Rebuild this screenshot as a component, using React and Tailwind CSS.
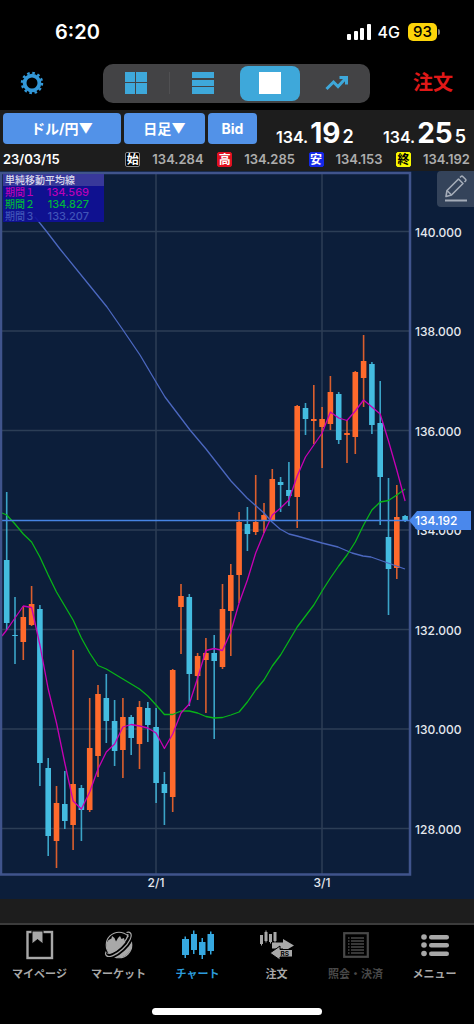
import clsx from "clsx";

// [high, body top, body bottom, low, up]
const candles = [
  [492, 560, 623, 630, 0],
  [597, 635, 636, 664, 0],
  [606, 617, 642, 660, 1],
  [586, 604, 625, 626, 1],
  [605, 609, 763, 786, 0],
  [758, 768, 836, 856, 0],
  [786, 803, 841, 868, 1],
  [771, 804, 821, 829, 0],
  [650, 784, 825, 850, 1],
  [785, 788, 810, 841, 0],
  [698, 748, 810, 812, 1],
  [685, 694, 756, 777, 1],
  [674, 698, 721, 743, 0],
  [700, 721, 751, 766, 0],
  [698, 717, 750, 778, 1],
  [715, 717, 738, 755, 0],
  [701, 707, 744, 769, 1],
  [702, 708, 725, 742, 0],
  [708, 727, 783, 803, 0],
  [772, 784, 793, 825, 0],
  [669, 670, 797, 812, 1],
  [584, 596, 607, 654, 1],
  [594, 597, 674, 706, 0],
  [653, 656, 676, 700, 1],
  [638, 653, 660, 713, 1],
  [635, 653, 661, 739, 0],
  [584, 609, 667, 669, 1],
  [564, 575, 611, 656, 1],
  [512, 522, 575, 603, 1],
  [507, 524, 534, 551, 0],
  [475, 522, 532, 535, 1],
  [503, 515, 520, 533, 1],
  [469, 479, 520, 521, 1],
  [477, 482, 485, 512, 0],
  [462, 490, 496, 506, 0],
  [405, 406, 497, 528, 1],
  [403, 408, 419, 435, 0],
  [385, 419, 421, 444, 1],
  [407, 419, 427, 468, 1],
  [376, 392, 424, 430, 1],
  [392, 394, 440, 444, 0],
  [420, 433, 435, 463, 1],
  [371, 372, 437, 454, 1],
  [335, 361, 378, 407, 1],
  [362, 364, 425, 434, 0],
  [381, 423, 477, 525, 0],
  [478, 537, 569, 615, 0],
  [485, 517, 568, 579, 1],
  [515, 516, 520, 522, 0],
];

const candleX = (i) => 6.7 + i * 8.3;

const shortAverage = [
  630, 618, 606, 607.5, 645, 689, 723, 763, 801, 809, 792, 769, 752, 744, 727, 724.5, 726, 728,
  733, 748.5, 734, 713, 704, 678, 650.5, 648.5, 650.5, 632, 603, 580, 553, 533, 515, 508, 500,
  476, 457, 445, 433, 412, 418, 420.5, 411, 400, 407, 414, 441, 470, 501,
];

const middleAverage = [
  515, 524, 534, 542, 557, 575, 592, 606, 620, 638, 653, 665.5, 669, 674, 679, 684, 689, 696,
  705, 714.5, 714.5, 711, 711, 713, 716.5, 718, 717.5, 715, 712, 702, 690, 680, 666, 655, 641,
  627, 616, 605, 591, 578, 566, 555, 542, 525, 510, 502, 500.5, 495, 489,
];

const longAverage =
  "35,217 47,232 60,249 90,286 107,307 123,330 140,355 156,382 165,397 190,430 206,449 231,481 247,498 264,513 272,522 280,529 289,534 297,536 322,543 338,547 352,553 363,556 371,557 388,563 405,569";

const toPoints = (start, ys) => [start, ...ys.map((y, i) => `${candleX(i)},${y}`)].join(" ");

const priceLines = [
  { label: "140.000", y: 231.5 },
  { label: "138.000", y: 331 },
  { label: "136.000", y: 430.5 },
  { label: "134.000", y: 530 },
  { label: "132.000", y: 629.5 },
  { label: "130.000", y: 729 },
  { label: "128.000", y: 828.5 },
];

const dateLines = [
  { label: "2/1", x: 156 },
  { label: "3/1", x: 322 },
];

const averages = [
  { label: "期間１", value: "134.569", color: "text-[#b800b8]" },
  { label: "期間２", value: "134.827", color: "text-[#00b43c]" },
  { label: "期間３", value: "133.207", color: "text-[#4054b8]" },
];

const ohlc = [
  { label: "始", value: "134.284", badge: "bg-black text-white border-[#8a8a8a]" },
  { label: "高", value: "134.285", badge: "bg-[#e01020] text-white border-[#e01020]" },
  { label: "安", value: "134.153", badge: "bg-[#1428e8] text-white border-[#1428e8]" },
  { label: "終", value: "134.192", badge: "bg-[#f8f800] text-black border-[#f8f800]" },
];

function StatusBar() {
  return (
    <div className="flex h-[60px] items-center justify-between pl-[55px] pr-[34px] pt-1">
      <span className="text-[20px] font-semibold">6:20</span>
      <div className="flex items-center">
        <svg width="25" height="16" viewBox="0 0 25 16" fill="#fff">
          <rect x="0" y="10" width="4" height="6" rx="1" />
          <rect x="7" y="7" width="4" height="9" rx="1" />
          <rect x="13" y="4" width="4" height="12" rx="1" />
          <rect x="20" y="0" width="4" height="16" rx="1" />
        </svg>
        <span className="ml-1.5 text-[16px] font-medium">4G</span>
        <span className="ml-2 flex h-[18px] w-[29px] items-center justify-center rounded-[5px] bg-[#fcd40a] text-[15px] font-medium text-black">
          93
        </span>
        <span className="ml-px h-[6px] w-[2px] rounded-r bg-[#777]" />
      </div>
    </div>
  );
}

function GearIcon() {
  return (
    <svg width="24" height="24" viewBox="0 0 24 24" fill="none" stroke="#3398d8">
      <circle cx="12" cy="12" r="7.4" strokeWidth="3.8" />
      <circle cx="12" cy="12" r="10" strokeWidth="2.4" strokeDasharray="2.6 2.636" />
    </svg>
  );
}

function Toolbar() {
  return (
    <div className="flex h-[50px] items-center justify-between pb-2 pl-5 pr-[21px] pt-1">
      <button type="button" aria-label="設定">
        <GearIcon />
      </button>
      <div className="ml-4 grid h-[39px] w-[267px] grid-cols-4 items-center rounded-[10px] bg-[#434345]">
        <button type="button" aria-label="四分割" className="flex justify-center border-r border-[#505052]">
          <svg width="22" height="22" fill="#3ea8da">
            <rect width="10" height="10" />
            <rect x="11" width="11" height="10" />
            <rect y="11" width="10" height="11" />
            <rect x="11" y="11" width="11" height="11" />
          </svg>
        </button>
        <button type="button" aria-label="一覧" className="flex justify-center">
          <svg width="22" height="22" fill="#3ea8da">
            <rect width="22" height="6" />
            <rect y="8" width="22" height="6" />
            <rect y="15" width="22" height="7" />
          </svg>
        </button>
        <button
          type="button"
          aria-label="単独"
          className="mx-[3px] flex h-[35px] items-center justify-center rounded-[8px] bg-[#3ea8da]"
        >
          <span className="size-[22px] bg-white" />
        </button>
        <button type="button" aria-label="推移" className="flex justify-center">
          <svg width="24" height="16" viewBox="0 0 24 16" fill="none" stroke="#3ea8da" strokeWidth="3">
            <path d="M1.5 14 8.5 7l4.5 4.5L20 4" />
            <path d="M14.5 2.5h7V9.5" />
          </svg>
        </button>
      </div>
      <button type="button" className="text-[20px] font-bold text-[#e01818]">
        注文
      </button>
    </div>
  );
}

function Quote({ head, main, tail }) {
  return (
    <div className="flex items-baseline font-semibold leading-[30px]">
      <span className="text-[16px]">{head}</span>
      <span className="ml-0.5 text-[28px] font-bold">{main}</span>
      <span className="ml-0.5 text-[18px]">{tail}</span>
    </div>
  );
}

function QuotePanel() {
  return (
    <div className="bg-[#1d1d1d]">
      <div className="flex h-[34px] items-center gap-[3px] pl-[3px] pr-2 pt-[3px] text-[14px] font-bold">
        <button type="button" className="h-[31px] w-[118px] rounded-[4px] bg-[#5292e8]">
          ドル/円▼
        </button>
        <button type="button" className="h-[31px] w-[81px] rounded-[4px] bg-[#5292e8]">
          日足▼
        </button>
        <button type="button" className="h-[31px] w-[49px] rounded-[4px] bg-[#5292e8]">
          Bid
        </button>
        <div className="flex flex-1 justify-between pl-4 pt-3">
          <Quote head="134." main="19" tail="2" />
          <Quote head="134." main="25" tail="5" />
        </div>
      </div>
      <div className="flex h-[27px] items-center justify-between pl-[3px] pr-1 pt-1 text-[13px] font-semibold">
        <span className="mr-[52px]">23/03/15</span>
        {ohlc.map((o) => (
          <div key={o.label} className="flex items-center gap-3">
            <span
              className={clsx(
                "flex size-[15px] items-center justify-center rounded-[2px] border text-[12px] font-bold",
                o.badge
              )}
            >
              {o.label}
            </span>
            <span className="text-[#adadad]">{o.value}</span>
          </div>
        ))}
      </div>
    </div>
  );
}

function Legend() {
  return (
    <div className="absolute left-[3px] top-[3px] w-[101px] bg-[#10109a]/90 text-[10px] leading-[12px]">
      <div className="bg-[#38389a] pl-0.5 font-medium text-[#dcdcec]">単純移動平均線</div>
      {averages.map((a) => (
        <div key={a.label} className={clsx("flex justify-between pl-0.5 pr-[15px] font-medium", a.color)}>
          <span>{a.label}</span>
          <span className="text-[11px] leading-[12px]">{a.value}</span>
        </div>
      ))}
    </div>
  );
}

function Chart() {
  return (
    <div className="relative bg-[#0c1e3a]">
      <svg className="block h-auto w-full" viewBox="0 171 474 728">
        <g stroke="#2c3e56" strokeWidth="1.5">
          {priceLines.map((p) => (
            <line key={p.label} x1="2" x2="410" y1={p.y} y2={p.y} />
          ))}
          {dateLines.map((d) => (
            <line key={d.label} x1={d.x} x2={d.x} y1="173" y2="874" />
          ))}
        </g>

        {candles.map(([high, top, bottom, low, up], i) => (
          <g key={i} fill={up ? "#ff6a2c" : "#44bce0"}>
            <rect x={candleX(i) - 0.8} y={high} width="1.6" height={low - high} opacity="0.85" />
            <rect x={candleX(i) - 2.8} y={top} width="5.6" height={bottom - top} />
          </g>
        ))}

        <g fill="none" strokeWidth="1.3" strokeLinejoin="round">
          <polyline points={longAverage} stroke="#4c68c0" />
          <polyline points={toPoints("2,513", middleAverage)} stroke="#08b418" />
          <polyline points={toPoints("2,636", shortAverage)} stroke="#c800b4" />
        </g>

        <line x1="2" x2="412" y1="520.5" y2="520.5" stroke="#4684e4" strokeWidth="1.6" />
        <rect x="1" y="173" width="409" height="701.5" fill="none" stroke="#40548c" strokeWidth="2.5" />

        <g fill="#e4e8ee" fontSize="12" fontWeight="500">
          {priceLines.map((p) => (
            <text key={p.label} x="415" y={p.y + 5}>
              {p.label}
            </text>
          ))}
          {dateLines.map((d) => (
            <text key={d.label} x={d.x} y="887" textAnchor="middle">
              {d.label}
            </text>
          ))}
        </g>

        <path d="M409 520.5 417 511h54v19h-54Z" fill="#4a88ec" />
        <text x="415" y="525" fill="#fff" fontSize="12" fontWeight="500">
          134.192
        </text>
      </svg>
      <Legend />
      <button
        type="button"
        aria-label="描画"
        className="absolute right-0 top-0 flex h-9 w-[37px] items-center justify-center rounded-l-[4px] bg-[#34435a]"
      >
        <svg width="24" height="28" viewBox="0 0 24 28" fill="none" stroke="#a4acb8" strokeWidth="1.6" strokeLinejoin="round">
          <path d="M3 15.5 14.5 4l4.5 4.5L7.5 20 2 21.5Z" />
          <path d="M3 15.5 7.5 20M16 2.5l1-1q1-.8 2 .2l2.3 2.3q1 1 .2 2l-1 1" />
          <path d="M1 25.5h22" strokeWidth="2" />
        </svg>
      </button>
    </div>
  );
}

function BookIcon() {
  return (
    <svg width="28" height="30" viewBox="0 0 28 30">
      <rect x="1.5" y="2" width="24.5" height="26" fill="none" stroke="#a8a8a8" strokeWidth="2.4" />
      <path d="M6 1h11v13l-5.5-4.5L6 14Z" fill="#a8a8a8" stroke="#000" />
    </svg>
  );
}

function PlanetIcon() {
  return (
    <svg width="30" height="30" viewBox="0 0 30 30">
      <circle cx="15" cy="15" r="12.8" fill="none" stroke="#a8a8a8" strokeWidth="1.1" />
      <path
        d="M2.500 13l2-3 3-1.500L8 6l2.500 2 1.500 3.500L14 8l2-2 1.500 3L20 8l1 4 2.500-1 1 2.500 3.500-.5q.5 6-3.500 10-4 4.500-9.500 4.500-6 0-10-4.500-3-4-2.500-10Z"
        fill="#a8a8a8"
      />
      <g fill="none" transform="rotate(-43 15 15)">
        <path d="M-1.500 14A16.500 6.500 0 0 0 31.500 14" stroke="#000" strokeWidth="5" />
        <path d="M1 11Q-1.500 12-1.500 14A16.500 6.500 0 0 0 31.500 14Q31.500 12 29 11" stroke="#a8a8a8" strokeWidth="1.2" />
        <path d="M1 13A14.500 5 0 0 0 29 13" stroke="#a8a8a8" strokeWidth="1.2" />
      </g>
    </svg>
  );
}

function CandlesIcon() {
  return (
    <svg width="32" height="30" viewBox="0 0 32 30" fill="#36a8e0">
      <path d="M0 9h2.5V6.5H4V9h3v16H4v3H2.500v-3H0Z" />
      <path d="M9 4h2V.5h1.500V4H15v16h-2.500v4H11v-4H9Z" />
      <path d="M17 12h2.500V8H21v4h2.500v13H21v4h-1.500v-4H17Z" />
      <path d="M25.500 4H28V1.500h1.500V4H32v17h-2.500v3.500H28V21h-2.500Z" />
    </svg>
  );
}

function OrderIcon() {
  return (
    <svg width="36" height="30" viewBox="0 0 36 30" fill="#a8a8a8">
      <path d="M1 5h3v9H3v1.500H2V14H1ZM5.500 2h1V.5h1V2h1v9h-1v1.500h-1V11h-1ZM10 4h3v8h-1v1.500h-1V12h-1ZM14.500 2h3v9h-1v1.500h-1V11h-1Z" />
      <path d="M13 12.500h11V9l11 6.500L24 22v-3.500H13Z" />
      <path d="M21 16v3.500h12.500v7.500H21v3L11 23Z" stroke="#000" />
      <text x="21.5" y="25.5" fontSize="6.5" fontWeight="700" fill="#000">
        RS
      </text>
    </svg>
  );
}

function ListIcon() {
  return (
    <svg width="26" height="30" viewBox="0 0 26 30" fill="none" stroke="#484848">
      <rect x="1.2" y="3.2" width="23.6" height="23.6" strokeWidth="2.2" />
      <path
        d="M5 8h1.500M8 8h13M5 11h1.500M8 11h13M5 14h1.500M8 14h13M5 17h1.500M8 17h13M5 20h1.500M8 20h13M5 23h1.500M8 23h13"
        strokeWidth="1.3"
      />
    </svg>
  );
}

function MenuIcon() {
  return (
    <svg width="28" height="30" viewBox="0 0 28 30" fill="#a8a8a8">
      <circle cx="3" cy="7" r="2.8" />
      <circle cx="3" cy="15" r="2.8" />
      <circle cx="3" cy="23.5" r="2.8" />
      <rect x="8" y="5" width="20" height="4.5" rx="2.2" />
      <rect x="8" y="13" width="20" height="4.5" rx="2.2" />
      <rect x="8" y="21.5" width="20" height="4.5" rx="2.2" />
    </svg>
  );
}

const tabs = [
  { label: "マイページ", icon: BookIcon, color: "text-[#a8a8a8]" },
  { label: "マーケット", icon: PlanetIcon, color: "text-[#a8a8a8]" },
  { label: "チャート", icon: CandlesIcon, color: "text-[#2c9cdc]" },
  { label: "注文", icon: OrderIcon, color: "text-[#a8a8a8]" },
  { label: "照会・決済", icon: ListIcon, color: "text-[#484848]" },
  { label: "メニュー", icon: MenuIcon, color: "text-[#a8a8a8]" },
];

function TabBar() {
  return (
    <nav className="border-t-2 border-[#3c3c3c] bg-black">
      <div className="grid grid-cols-6 pt-[5px]">
        {tabs.map(({ label, icon: Icon, color }) => (
          <a key={label} href="#" className={clsx("flex flex-col items-center text-[11px] font-bold", color)}>
            <Icon />
            <span className="mt-[6px] whitespace-nowrap leading-[16px]">{label}</span>
          </a>
        ))}
      </div>
      <div className="flex justify-center pb-[9px] pt-[26px]">
        <div className="h-[7px] w-[170px] rounded-full bg-white" />
      </div>
    </nav>
  );
}

export default function App() {
  return (
    <div className="flex min-h-screen flex-col bg-[#1d1d1d] font-['Inter','Noto_Sans_CJK_JP',sans-serif] text-white">
      <header className="bg-black">
        <StatusBar />
        <Toolbar />
      </header>
      <main className="flex-1 pb-6">
        <QuotePanel />
        <Chart />
      </main>
      <TabBar />
    </div>
  );
}
